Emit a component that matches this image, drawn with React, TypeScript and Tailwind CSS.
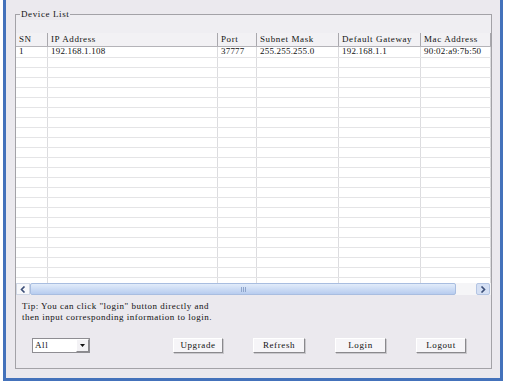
const serif = "font-['Liberation_Serif',serif]";

const cols = [
  { label: 'SN', value: '1', cls: 'w-[32px]' },
  { label: 'IP Address', value: '192.168.1.108', cls: 'w-[170px]' },
  { label: 'Port', value: '37777', cls: 'w-[39px]' },
  { label: 'Subnet Mask', value: '255.255.255.0', cls: 'w-[82px]' },
  { label: 'Default Gateway', value: '192.168.1.1', cls: 'w-[82px]' },
  { label: 'Mac Address', value: '90:02:a9:7b:50', cls: 'flex-1 min-w-0' },
];

const emptyRows = Array.from({ length: 23 }, (_, i) => i);

function Chevron({ dir }: { dir: 'left' | 'right' }) {
  return (
    <svg width="6" height="7" viewBox="0 0 6 7">
      <path
        d={dir === 'left' ? 'M4.5 0.5 L1.5 3.5 L4.5 6.5' : 'M1.5 0.5 L4.5 3.5 L1.5 6.5'}
        fill="none"
        stroke="#3c4f78"
        strokeWidth="1.6"
      />
    </svg>
  );
}

function Button({ label, w }: { label: string; w: string }) {
  return (
    <div
      className={`${w} h-[15px] flex items-center justify-center bg-[#f6f5f8] border border-t-white border-l-white border-r-[#8a898d] border-b-[#8a898d] shadow-[1px_1px_0_#c9c8cc] text-[9px] tracking-[0.6px] text-[#111]`}
    >
      {label}
    </div>
  );
}

export default function App() {
  return (
    <div className={`w-[508px] h-[388px] bg-white overflow-hidden ${serif}`}>
      <div className="ml-[3px] w-[500px] h-[381px] bg-[#ebe9ee] border-x-[3px] border-b-[3px] border-[#4472bb] flex flex-col">
        <div className="relative ml-[9px] mt-[14px] w-[477px] h-[355px] border border-[#a3a2a7] flex flex-col">
          {/* legend */}
          <span className="absolute left-[4px] -top-[6px] bg-[#ebe9ee] px-[1px] leading-[11px] text-[9px] tracking-[0.6px] text-[#111]">
            Device List
          </span>

          <div className="h-[18px] bg-[#efeef2]" />

          {/* list */}
          <div className="flex flex-col bg-white">
            <div className="flex h-[14px] bg-[#f2f1f4] border-b border-[#b4b3b8]">
              {cols.map((c) => (
                <div
                  key={c.label}
                  className={`${c.cls} h-full flex items-center pl-[3px] border-r border-[#a9a8ad] text-[9px] tracking-[0.6px] text-[#111] whitespace-nowrap overflow-hidden`}
                >
                  {c.label}
                </div>
              ))}
            </div>
            <div className="h-[236px] overflow-hidden">
              <div className="flex h-[11px] border-b border-[#e4e4e6]">
                {cols.map((c) => (
                  <div
                    key={c.label}
                    className={`${c.cls} h-full flex items-center pl-[3px] border-r border-[#dcdcdf] text-[9px] tracking-[0.2px] text-[#111] whitespace-nowrap overflow-hidden`}
                  >
                    {c.value}
                  </div>
                ))}
              </div>
              {emptyRows.map((r) => (
                <div key={r} className="flex h-[10px] border-b border-[#e4e4e6]">
                  {cols.map((c) => (
                    <div key={c.label} className={`${c.cls} h-full border-r border-[#dcdcdf]`} />
                  ))}
                </div>
              ))}
            </div>
          </div>

          {/* horizontal scrollbar */}
          <div className="flex h-[12px] bg-[#f5f5f7]">
            <div className="w-[14px] h-full flex items-center justify-center bg-[#f7f8fb] border border-[#cfd6e4]">
              <Chevron dir="left" />
            </div>
            <div className="w-[426px] h-full flex items-center justify-center rounded-[2px] border border-[#a8bde0] bg-gradient-to-b from-[#e2ecfa] to-[#b7ccef]">
              <div className="flex gap-[1px]">
                <div className="w-[1px] h-[5px] bg-[#8ea5cb]" />
                <div className="w-[1px] h-[5px] bg-[#8ea5cb]" />
                <div className="w-[1px] h-[5px] bg-[#8ea5cb]" />
              </div>
            </div>
            <div className="flex-1" />
            <div className="w-[14px] h-full flex items-center justify-center rounded-[2px] border border-[#b4c5e3] bg-[#d5e0f4]">
              <Chevron dir="right" />
            </div>
            <div className="w-[1px]" />
          </div>

          {/* tip */}
          <div className="mt-[6px] pl-[6px] text-[9px] tracking-[0.5px] leading-[11px] text-[#111]">
            <div>Tip: You can click "login" button directly and</div>
            <div>then input corresponding information to login.</div>
          </div>

          {/* bottom row */}
          <div className="mt-[15px] flex items-center">
            <div className="ml-[16px] w-[58px] h-[15px] flex bg-white border border-[#8e8d92]">
              <div className="flex-1 flex items-center pl-[2px] text-[9px] tracking-[0.6px] text-[#111]">
                All
              </div>
              <div className="w-[13px] h-full flex items-center justify-center bg-[#f3f2f5] border border-t-white border-l-white border-r-[#8a898d] border-b-[#8a898d]">
                <svg width="5" height="3" viewBox="0 0 5 3">
                  <path d="M0 0 H5 L2.5 3 Z" fill="#111" />
                </svg>
              </div>
            </div>
            <div className="ml-[83px] flex gap-[30px]">
              <Button label="Upgrade" w="w-[50px]" />
              <Button label="Refresh" w="w-[52px]" />
              <Button label="Login" w="w-[51px]" />
              <Button label="Logout" w="w-[50px]" />
            </div>
          </div>
        </div>
      </div>
    </div>
  );
}
